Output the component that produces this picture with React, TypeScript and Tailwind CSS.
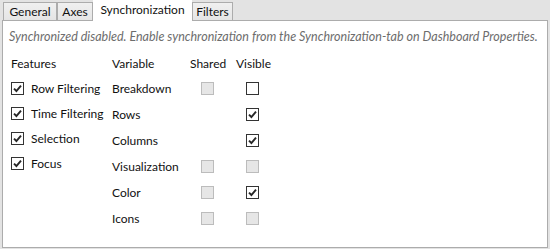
type Box = { checked?: boolean; disabled?: boolean };

function CheckBox({ checked, disabled }: Box) {
  const cls = disabled
    ? 'border-[#bcbcbc] bg-[#e6e6e6]'
    : 'border-[#333333] bg-white';
  return (
    <span className={`flex h-[13px] w-[13px] shrink-0 items-center justify-center border ${cls}`}>
      {checked && (
        <svg width="11" height="11" viewBox="0 0 11 11" fill="none">
          <path d="M2 5.6 L4.4 8 L9 2.6" stroke="#262626" strokeWidth="1.9" />
        </svg>
      )}
    </span>
  );
}

const features = ['Row Filtering', 'Time Filtering', 'Selection', 'Focus'];

const variables: { name: string; shared: boolean; visible: Box }[] = [
  { name: 'Breakdown', shared: true, visible: {} },
  { name: 'Rows', shared: false, visible: { checked: true } },
  { name: 'Columns', shared: false, visible: { checked: true } },
  { name: 'Visualization', shared: true, visible: { disabled: true } },
  { name: 'Color', shared: true, visible: { checked: true } },
  { name: 'Icons', shared: true, visible: { disabled: true } },
];

const tabs = ['General', 'Axes', 'Synchronization', 'Filters'];
const tabWidths = ['w-[54px]', 'w-[36px]', 'w-[99px]', 'w-[41px]'];

export default function App() {
  return (
    <div
      className="h-[249px] w-[550px] bg-[#e3e3e3] text-[12px] leading-[16px] text-[#111]"
      style={{ fontFamily: 'Lato, "Noto Sans", sans-serif' }}
    >
      {/* tab strip */}
      <div className="flex h-[20px] items-end pl-[3px]">
        {tabs.map((t, i) =>
          t === 'Synchronization' ? (
            <div
              key={t}
              className={`relative z-10 -mb-px flex h-[21px] items-start justify-center bg-white pt-[2px] ${tabWidths[i]}`}
            >
              {t}
            </div>
          ) : (
            <div
              key={t}
              className={`flex h-[18px] items-center justify-center border border-b-0 border-[#acacac] bg-gradient-to-b from-[#f0f0f0] to-[#e5e5e5] pt-px ${tabWidths[i]}`}
            >
              {t}
            </div>
          ),
        )}
      </div>

      {/* panel */}
      <div className="ml-[2px] h-[228px] w-[546px] border border-[#acacac] bg-white pl-[6px] pt-[8px]">
        <p className="whitespace-nowrap text-[12.5px] italic text-[#6d6d6d]">
          Synchronized disabled. Enable synchronization from the Synchronization-tab on Dashboard Properties.
        </p>

        <div className="mt-[5px] flex pl-[2px]">
          <div className="w-[101px]">
            <div className="flex h-[26px] items-center pt-px">Features</div>
            {features.map((f) => (
              <div key={f} className="flex h-[25px] items-center gap-[7px]">
                <CheckBox checked />
                <span className="pt-px">{f}</span>
              </div>
            ))}
          </div>

          <div>
            <div className="flex h-[25px] items-center pt-[2px]">
              <span className="w-[78px]">Variable</span>
              <span className="w-[46px]">Shared</span>
              <span>Visible</span>
            </div>
            {variables.map((v) => (
              <div key={v.name} className="flex h-[26px] items-center">
                <span className="w-[78px] pt-[2px]">{v.name}</span>
                <span className="w-[46px] pl-[11px]">
                  {v.shared && <CheckBox disabled />}
                </span>
                <span className="pl-[10px]">
                  <CheckBox {...v.visible} />
                </span>
              </div>
            ))}
          </div>
        </div>
      </div>
    </div>
  );
}
